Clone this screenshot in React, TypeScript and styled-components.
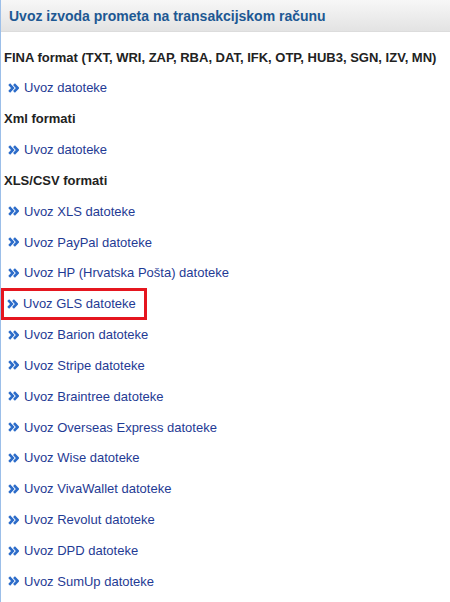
import React from 'react';
import { createGlobalStyle, styled } from 'styled-components';

type Section = {
  title: string;
  links: string[];
};

const sections: Section[] = [
  {
    title: 'FINA format (TXT, WRI, ZAP, RBA, DAT, IFK, OTP, HUB3, SGN, IZV, MN)',
    links: ['Uvoz datoteke'],
  },
  { title: 'Xml formati', links: ['Uvoz datoteke'] },
  {
    title: 'XLS/CSV formati',
    links: [
      'Uvoz XLS datoteke',
      'Uvoz PayPal datoteke',
      'Uvoz HP (Hrvatska Pošta) datoteke',
      'Uvoz GLS datoteke',
      'Uvoz Barion datoteke',
      'Uvoz Stripe datoteke',
      'Uvoz Braintree datoteke',
      'Uvoz Overseas Express datoteke',
      'Uvoz Wise datoteke',
      'Uvoz VivaWallet datoteke',
      'Uvoz Revolut datoteke',
      'Uvoz DPD datoteke',
      'Uvoz SumUp datoteke',
    ],
  },
];

const highlighted = 'Uvoz GLS datoteke';

function DoubleChevron() {
  return (
    <svg width="11" height="10" viewBox="0 0 11 10" aria-hidden="true">
      <path d="M1.2 1.2 L4.8 5 L1.2 8.8" fill="none" stroke="currentColor" strokeWidth="2.6" />
      <path d="M6 1.2 L9.6 5 L6 8.8" fill="none" stroke="currentColor" strokeWidth="2.6" />
    </svg>
  );
}

export default function App() {
  return (
    <>
      <GlobalStyle />
      <Panel>
        <Header>Uvoz izvoda prometa na transakcijskom računu</Header>
        <Content>
          {sections.map((section) => (
            <React.Fragment key={section.title}>
              <Row>
                <Heading>{section.title}</Heading>
              </Row>
              {section.links.map((link) => (
                <Row key={link}>
                  <LinkItem href="#" $marked={link === highlighted}>
                    <IconWrap>
                      <DoubleChevron />
                    </IconWrap>
                    {link}
                  </LinkItem>
                </Row>
              ))}
            </React.Fragment>
          ))}
        </Content>
      </Panel>
    </>
  );
}

const GlobalStyle = createGlobalStyle`
  html, body {
    margin: 0;
    padding: 0;
    background: #fff;
  }
  body {
    font-family: "Liberation Sans", Arial, sans-serif;
    font-size: 13px;
    color: #222;
  }
`;

const Panel = styled.div`
  width: 450px;
  height: 602px;
  box-sizing: border-box;
  border-left: 1px solid #9cbfe9;
  overflow: hidden;
`;

const Header = styled.div`
  height: 32px;
  box-sizing: border-box;
  padding: 0 8px;
  display: flex;
  align-items: center;
  background: linear-gradient(#f7f7f7, #e3e3e3);
  border-bottom: 1px solid #dcdcdc;
  color: #1d5893;
  font-size: 14px;
  font-weight: bold;
`;

const Content = styled.div`
  padding-top: 9.6px;
`;

const Row = styled.div`
  height: 30.85px;
  display: flex;
  align-items: center;
  padding-left: 3px;
`;

const Heading = styled.span`
  font-weight: bold;
  color: #222;
`;

const LinkItem = styled.a<{ $marked: boolean }>`
  display: flex;
  align-items: center;
  height: 32px;
  box-sizing: border-box;
  margin-left: ${(p) => (p.$marked ? '-3px' : '0')};
  padding: 0 ${(p) => (p.$marked ? '8px' : '0')} 0 ${(p) => (p.$marked ? '3px' : '4px')};
  border: ${(p) => (p.$marked ? '3px solid #e5161f' : 'none')};
  color: #1f3b94;
  text-decoration: none;
`;

const IconWrap = styled.span`
  display: inline-flex;
  color: #2c6cc9;
  margin-right: 5px;
`;
